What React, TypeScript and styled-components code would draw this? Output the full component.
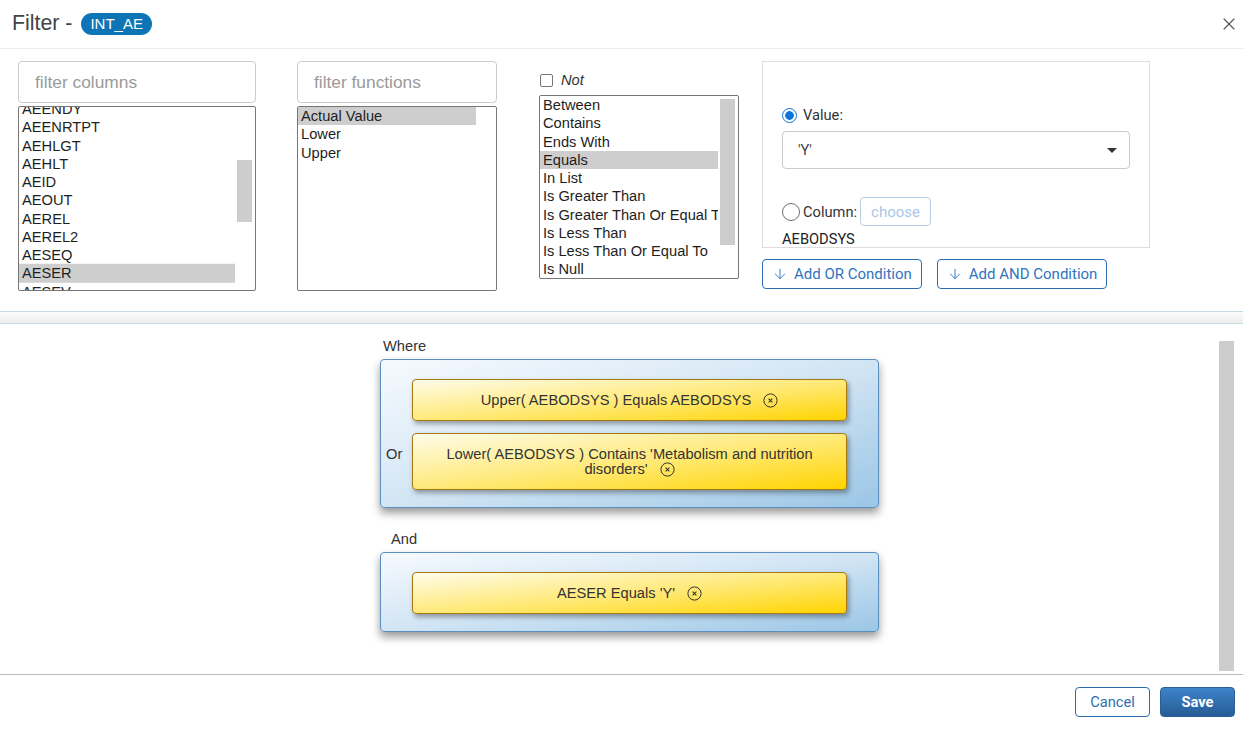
import React from 'react';
import styled, { createGlobalStyle } from 'styled-components';
import { ArrowDown, X } from 'lucide-react';

const columnNames = [
  'AEENDY',
  'AEENRTPT',
  'AEHLGT',
  'AEHLT',
  'AEID',
  'AEOUT',
  'AEREL',
  'AEREL2',
  'AESEQ',
  'AESER',
  'AESEV',
];
const functionNames = ['Actual Value', 'Lower', 'Upper'];
const operators = [
  'Between',
  'Contains',
  'Ends With',
  'Equals',
  'In List',
  'Is Greater Than',
  'Is Greater Than Or Equal To',
  'Is Less Than',
  'Is Less Than Or Equal To',
  'Is Null',
];

type Group = {
  label: string;
  labelIndent: number;
  conditions: { text: string }[];
};

const groups: Group[] = [
  {
    label: 'Where',
    labelIndent: 3,
    conditions: [
      { text: 'Upper( AEBODSYS ) Equals AEBODSYS' },
      { text: "Lower( AEBODSYS ) Contains 'Metabolism and nutrition disorders'" },
    ],
  },
  {
    label: 'And',
    labelIndent: 11,
    conditions: [{ text: "AESER Equals 'Y'" }],
  },
];

const RemoveIcon = () => (
  <svg width="15" height="15" viewBox="0 0 15 15" fill="none">
    <circle cx="7.5" cy="7.5" r="6.6" stroke="#333" strokeWidth="1" />
    <path d="M5.6 5.6l3.8 3.8M9.4 5.6l-3.8 3.8" stroke="#333" strokeWidth="1.1" />
  </svg>
);

type ListProps = {
  items: string[];
  selected: string;
  height: number;
  offset?: number;
  thumb?: { top: number; size: number };
};

const List = ({ items, selected, height, offset = 0, thumb }: ListProps) => (
  <ListBox $height={height}>
    <ListViewport>
      <ListScroller $offset={offset}>
        {items.map((item) => (
          <ListItem key={item} $selected={item === selected}>
            {item}
          </ListItem>
        ))}
      </ListScroller>
    </ListViewport>
    <ScrollTrack>{thumb && <ScrollThumb $top={thumb.top} $size={thumb.size} />}</ScrollTrack>
  </ListBox>
);

export default function App() {
  return (
    <>
      <GlobalStyle />
      <Dialog>
        <Header>
          <Title>Filter -</Title>
          <Badge>INT_AE</Badge>
          <CloseButton aria-label="close">
            <X size={20} strokeWidth={1.4} color="#555" />
          </CloseButton>
        </Header>

        <TopPanel>
          <Column $width={238} $gap={0}>
            <FilterInput placeholder="filter columns" />
            <List
              items={columnNames}
              selected="AESER"
              height={185}
              offset={-7.25}
              thumb={{ top: 53, size: 62 }}
            />
          </Column>
          <Column $width={200} $gap={41}>
            <FilterInput placeholder="filter functions" />
            <List items={functionNames} selected="Actual Value" height={185} />
          </Column>
          <Column $width={200} $gap={42}>
            <NotRow>
              <Checkbox />
              <NotLabel>Not</NotLabel>
            </NotRow>
            <List
              items={operators}
              selected="Equals"
              height={184}
              thumb={{ top: 3, size: 146 }}
            />
          </Column>
          <Column $width={388} $gap={23}>
            <ValuePanel>
              <RadioRow>
                <Radio $checked $size={15} />
                <RadioLabel $gap={6}>Value:</RadioLabel>
              </RadioRow>
              <SelectBox>
                <span>'Y'</span>
                <Caret />
              </SelectBox>
              <ColumnRow>
                <Radio $size={18} />
                <RadioLabel $gap={3}>Column:</RadioLabel>
                <ChooseButton>choose</ChooseButton>
              </ColumnRow>
              <ChosenColumn>AEBODSYS</ChosenColumn>
            </ValuePanel>
            <ButtonRow>
              <OutlineButton>
                <ArrowDown size={16} strokeWidth={1.4} />
                Add OR Condition
              </OutlineButton>
              <OutlineButton>
                <ArrowDown size={16} strokeWidth={1.4} />
                Add AND Condition
              </OutlineButton>
            </ButtonRow>
          </Column>
        </TopPanel>

        <Splitter />

        <LowerPanel>
          <ConditionsArea>
            {groups.map((group) => (
              <GroupBlock key={group.label}>
                <GroupLabel $indent={group.labelIndent}>{group.label}</GroupLabel>
                <GroupBox>
                  {group.conditions.map((cond, i) => (
                    <ConditionRow key={cond.text}>
                      <Connector>{i > 0 ? 'Or' : ''}</Connector>
                      <ConditionChip>
                        {cond.text}
                        <RemoveWrap>
                          <RemoveIcon />
                        </RemoveWrap>
                      </ConditionChip>
                    </ConditionRow>
                  ))}
                </GroupBox>
              </GroupBlock>
            ))}
          </ConditionsArea>
          <LowerTrack>
            <ScrollThumb $top={17} $size={330} />
          </LowerTrack>
        </LowerPanel>

        <Footer>
          <CancelButton>Cancel</CancelButton>
          <SaveButton>Save</SaveButton>
        </Footer>
      </Dialog>
    </>
  );
}

const GlobalStyle = createGlobalStyle`
  html, body {
    margin: 0;
    padding: 0;
    background: #fff;
  }
  body {
    font-family: 'Liberation Sans', Arial, sans-serif;
    color: #333;
  }
  * {
    box-sizing: border-box;
  }
`;

const Dialog = styled.div`
  width: 1243px;
  height: 734px;
  display: flex;
  flex-direction: column;
  background: #fff;
  overflow: hidden;
`;

const Header = styled.div`
  height: 49px;
  flex: none;
  display: flex;
  align-items: center;
  padding: 0 4px 1px 12px;
  border-bottom: 1px solid #ebebeb;
`;

const Title = styled.span`
  font-size: 21.33px;
  color: #444;
`;

const Badge = styled.span`
  margin-left: 9px;
  height: 22px;
  line-height: 22px;
  padding: 0 9px;
  border-radius: 11px;
  background: #0d74b6;
  color: #fff;
  font-size: 15px;
`;

const CloseButton = styled.button`
  margin-left: auto;
  border: none;
  background: none;
  padding: 0;
  display: flex;
  cursor: pointer;
`;

const TopPanel = styled.div`
  height: 262px;
  flex: none;
  display: flex;
  align-items: flex-start;
  padding: 12px 0 0 18px;
`;

const Column = styled.div<{ $width: number; $gap: number }>`
  width: ${(p) => p.$width}px;
  margin-left: ${(p) => p.$gap}px;
  display: flex;
  flex-direction: column;
`;

const FilterInput = styled.input`
  height: 42px;
  margin-bottom: 3px;
  border: 1px solid #ccc;
  border-radius: 4px;
  padding: 0 16px;
  font-family: 'Liberation Sans', Arial, sans-serif;
  font-size: 17.33px;
  color: #333;
  outline: none;
  &::placeholder {
    color: #9a9a9a;
  }
`;

const ListBox = styled.div<{ $height: number }>`
  height: ${(p) => p.$height}px;
  display: flex;
  border: 1px solid #767676;
  border-radius: 2px;
  overflow: hidden;
  background: #fff;
`;

const ListViewport = styled.div`
  flex: 1;
  min-width: 0;
  overflow: hidden;
`;

const ListScroller = styled.div<{ $offset: number }>`
  transform: translateY(${(p) => p.$offset}px);
`;

const ListItem = styled.div<{ $selected?: boolean }>`
  height: 18.25px;
  line-height: 18.25px;
  padding-left: 3px;
  font-size: 14.67px;
  white-space: nowrap;
  overflow: hidden;
  color: #1e1e1e;
  background: ${(p) => (p.$selected ? '#cecece' : 'transparent')};
`;

const ScrollTrack = styled.div`
  width: 20px;
  flex: none;
`;

const ScrollThumb = styled.div<{ $top: number; $size: number }>`
  margin: ${(p) => p.$top}px 0 0 2px;
  width: 15px;
  height: ${(p) => p.$size}px;
  background: #cdcdcd;
`;

const NotRow = styled.div`
  margin: 12px 0 8px;
  height: 14px;
  display: flex;
  align-items: center;
  gap: 8px;
  padding-left: 1px;
`;

const Checkbox = styled.span`
  width: 13px;
  height: 13px;
  border: 1px solid #767676;
  border-radius: 2px;
  background: #fff;
`;

const NotLabel = styled.span`
  font-size: 14.67px;
  font-style: italic;
  color: #333;
`;

const ValuePanel = styled.div`
  height: 187px;
  border: 1px solid #ddd;
  padding: 44px 19px 0;
  display: flex;
  flex-direction: column;
  overflow: hidden;
  font-family: Roboto, 'Liberation Sans', Arial, sans-serif;
`;

const RadioRow = styled.div`
  height: 18px;
  display: flex;
  align-items: center;
`;

const Radio = styled.span<{ $checked?: boolean; $size: number }>`
  width: ${(p) => p.$size}px;
  height: ${(p) => p.$size}px;
  flex: none;
  border-radius: 50%;
  border: 1.5px solid ${(p) => (p.$checked ? '#0b74d9' : '#707070')};
  background: ${(p) =>
    p.$checked
      ? 'radial-gradient(circle, #0b74d9 0 4px, #fff 4.6px)'
      : '#fff'};
`;

const RadioLabel = styled.span<{ $gap: number }>`
  margin-left: ${(p) => p.$gap}px;
  font-size: 14.67px;
  color: #333;
`;

const SelectBox = styled.div`
  margin-top: 7px;
  height: 38px;
  border: 1px solid #ccc;
  border-radius: 4px;
  padding: 0 12px 0 15px;
  display: flex;
  align-items: center;
  justify-content: space-between;
  font-size: 14.67px;
  color: #444;
`;

const Caret = styled.span`
  width: 0;
  height: 0;
  border-left: 5px solid transparent;
  border-right: 5px solid transparent;
  border-top: 5px solid #333;
`;

const ColumnRow = styled.div`
  margin-top: 28px;
  height: 29px;
  display: flex;
  align-items: center;
`;

const ChooseButton = styled.button`
  margin-left: 3px;
  height: 29px;
  width: 71px;
  border: 1px solid #b6d0ec;
  border-radius: 4px;
  background: #fff;
  color: #a9c7e8;
  font-family: Roboto, 'Liberation Sans', Arial, sans-serif;
  font-size: 15px;
  padding: 0;
`;

const ChosenColumn = styled.div`
  margin-top: 5px;
  line-height: 16px;
  font-size: 14.67px;
  color: #222;
`;

const ButtonRow = styled.div`
  margin-top: 11px;
  display: flex;
  gap: 15px;
`;

const OutlineButton = styled.button`
  height: 30px;
  display: flex;
  align-items: center;
  gap: 6px;
  padding: 0 9px 0 9px;
  border: 1px solid #2c6db2;
  border-radius: 4px;
  background: #fff;
  color: #2f74c0;
  font-family: Roboto, 'Liberation Sans', Arial, sans-serif;
  font-size: 15px;
`;

const Splitter = styled.div`
  height: 13px;
  flex: none;
  border-top: 1px solid #c6dbe4;
  border-bottom: 1px solid #c6dbe4;
  background: linear-gradient(#fcfcfc, #ececec);
`;

const LowerPanel = styled.div`
  height: 350px;
  flex: none;
  display: flex;
`;

const ConditionsArea = styled.div`
  flex: 1;
  padding: 14px 0 0 380px;
`;

const GroupBlock = styled.div`
  width: 499px;
  margin-bottom: 23px;
`;

const GroupLabel = styled.div<{ $indent: number }>`
  margin: 0 0 4px ${(p) => p.$indent}px;
  font-size: 14.67px;
  line-height: 17px;
  color: #333;
`;

const GroupBox = styled.div`
  display: flex;
  flex-direction: column;
  gap: 12px;
  padding: 19px 31px 17px 0;
  border: 1px solid #5b8fbf;
  border-radius: 4px;
  background: linear-gradient(to bottom right, #f6fafe 0%, #d2e5f4 50%, #9bc6e6 100%);
  box-shadow: 0 5px 9px rgba(0, 0, 0, 0.4);
`;

const ConditionRow = styled.div`
  display: grid;
  grid-template-columns: 31px 1fr;
  align-items: baseline;
`;

const Connector = styled.span`
  padding-left: 5px;
  font-size: 14.67px;
  color: #333;
`;

const ConditionChip = styled.div`
  padding: 13px 12px 12px;
  border: 1px solid #a87812;
  border-radius: 4px;
  background: linear-gradient(to bottom right, #fffcea 0%, #ffe870 55%, #ffd400 100%);
  box-shadow: 2px 3px 5px rgba(0, 0, 0, 0.35);
  text-align: center;
  font-size: 14.67px;
  line-height: 15px;
  color: #333;
`;

const RemoveWrap = styled.span`
  display: inline-block;
  margin-left: 12px;
  vertical-align: -3px;
  line-height: 0;
`;

const LowerTrack = styled.div`
  width: 26px;
  flex: none;
`;

const Footer = styled.div`
  height: 60px;
  flex: none;
  border-top: 1px solid #bbb;
  display: flex;
  justify-content: flex-end;
  align-items: flex-start;
  gap: 10px;
  padding: 12px 8px 0 0;
`;

const FooterButton = styled.button`
  width: 75px;
  height: 30px;
  border-radius: 4px;
  font-family: Roboto, 'Liberation Sans', Arial, sans-serif;
  font-size: 14.67px;
  padding: 0;
`;

const CancelButton = styled(FooterButton)`
  border: 1px solid #2c6cae;
  background: #fff;
  color: #2f6fae;
`;

const SaveButton = styled(FooterButton)`
  border: 1px solid #2a5f98;
  background: linear-gradient(#3d84c9, #275c95);
  color: #fff;
  font-weight: bold;
`;
